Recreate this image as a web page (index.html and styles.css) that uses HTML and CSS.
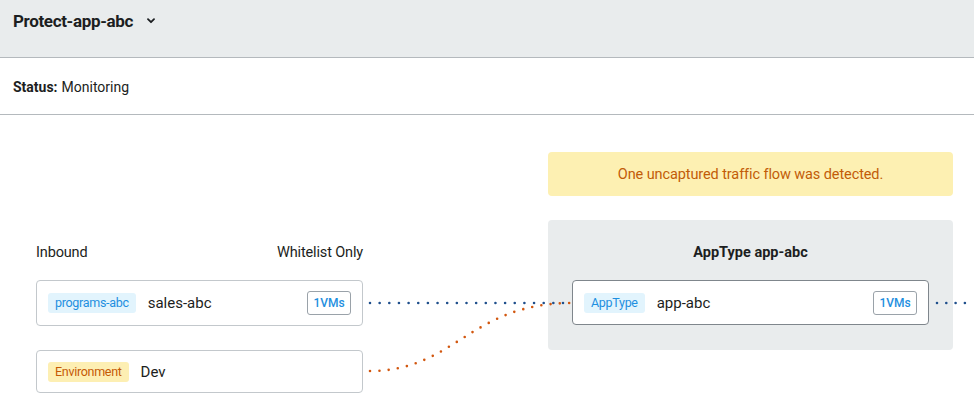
FILE: index.html
```html
<!DOCTYPE html>
<html lang="en">
<head>
<meta charset="utf-8">
<title>Protect-app-abc</title>
<link rel="stylesheet" href="styles.css">
</head>
<body>
<header class="topbar">
  <h1 class="title">Protect-app-abc</h1>
  <svg class="chev" width="8" height="6" viewBox="0 0 8 6"><path d="M1 1.2 L4 4.2 L7 1.2" fill="none" stroke="#1c1e21" stroke-width="1.8" stroke-linecap="round" stroke-linejoin="round"/></svg>
</header>
<section class="statusbar">
  <span class="status-label">Status:</span>
  <span class="status-value">Monitoring</span>
</section>
<main class="canvas">
  <svg class="links" width="974" height="301" viewBox="0 0 974 301">
    <path d="M370 188 L572 188" fill="none" stroke="#1f4f8c" stroke-width="2.6" stroke-linecap="round" stroke-dasharray="0 9.65"/>
    <path d="M370 256 C455 256 470 188 572 188" fill="none" stroke="#d2570f" stroke-width="2.6" stroke-linecap="round" stroke-dasharray="0 9.3"/>
    <path d="M937 188 L974 188" fill="none" stroke="#1f4f8c" stroke-width="2.6" stroke-linecap="round" stroke-dasharray="0 9.3"/>
  </svg>
  <div class="col-left">
    <div class="col-head">
      <span>Inbound</span>
      <span>Whitelist Only</span>
    </div>
    <div class="card card-light">
      <span class="tag tag-blue">programs-abc</span>
      <span class="name">sales-abc</span>
      <span class="vms">1VMs</span>
    </div>
    <div class="card card-light card-short">
      <span class="tag tag-yellow">Environment</span>
      <span class="name">Dev</span>
    </div>
  </div>
  <div class="col-right">
    <div class="alert">One uncaptured traffic flow was detected.</div>
    <div class="panel">
      <div class="panel-title">AppType app-abc</div>
      <div class="card card-dark">
        <span class="tag tag-blue">AppType</span>
        <span class="name">app-abc</span>
        <span class="vms">1VMs</span>
      </div>
    </div>
  </div>
</main>
</body>
</html>
```
FILE: styles.css
```css
* { box-sizing: border-box; }
html, body { margin: 0; padding: 0; }
body {
  font-family: Roboto, "Open Sans", "Liberation Sans", sans-serif;
  color: #1c1e21;
  background: #ffffff;
  width: 974px;
  height: 416px;
  overflow: hidden;
}
.topbar {
  height: 58px;
  background: #e9eced;
  border-bottom: 1px solid #b4b9bd;
  display: flex;
  align-items: center;
  padding: 0 0 16px 13px;
  gap: 14px;
}
.title {
  margin: 0;
  font-size: 17px;
  font-weight: 700;
  letter-spacing: -0.35px;
}
.chev { margin-top: 1px; }
.statusbar {
  height: 57px;
  border-bottom: 1px solid #b4b9bd;
  display: flex;
  align-items: center;
  padding: 2px 0 0 13px;
  font-size: 14px;
  gap: 4px;
}
.status-label { font-weight: 700; }
.canvas {
  position: relative;
  display: grid;
  grid-template-columns: 327px 405px;
  column-gap: 185px;
  padding-left: 36px;
  height: 301px;
}
.links {
  position: absolute;
  top: 0;
  left: 0;
  pointer-events: none;
}
.col-left {
  padding-top: 105px;
  display: flex;
  flex-direction: column;
}
.col-head {
  height: 60px;
  padding-top: 24px;
  line-height: 18px;
  font-size: 14.5px;
  letter-spacing: -0.15px;
  display: flex;
  justify-content: space-between;
}
.card {
  background: #fff;
  border-radius: 4px;
  display: flex;
  align-items: center;
  height: 46px;
  padding: 0 11px;
  position: relative;
  z-index: 1;
}
.card-light { border: 1px solid #c3c8cc; }
.card-dark { border: 1px solid #7f868c; }
.card-short { height: 43px; margin-top: 24px; }
.tag {
  font-size: 12.5px;
  line-height: 20px;
  padding: 0 7px;
  border-radius: 3px;
  letter-spacing: -0.3px;
}
.tag-blue { background: #e2f4fd; color: #1e8fe0; }
.tag-yellow { background: #fdefb3; color: #c55a05; }
.name {
  font-size: 15px;
  margin-left: 12px;
}
.vms {
  margin-left: auto;
  border: 1.5px solid #9aa2a9;
  border-radius: 3px;
  color: #1e8fe0;
  font-size: 12px;
  font-weight: 500;
  height: 24px;
  width: 44px;
  display: flex;
  align-items: center;
  justify-content: center;
}
.col-right {
  padding-top: 37px;
  display: flex;
  flex-direction: column;
}
.alert {
  height: 44px;
  background: #fdf0b2;
  border-radius: 4px;
  color: #c25c08;
  font-size: 14.5px;
  letter-spacing: -0.1px;
  display: flex;
  align-items: center;
  justify-content: center;
}
.panel {
  margin-top: 24px;
  background: #e9eced;
  border-radius: 4px;
  padding: 24px 24px 25px;
}
.panel-title {
  text-align: center;
  font-weight: 700;
  font-size: 14.5px;
  line-height: 18px;
  margin-bottom: 18px;
}
.panel .card { height: 45px; }
```
